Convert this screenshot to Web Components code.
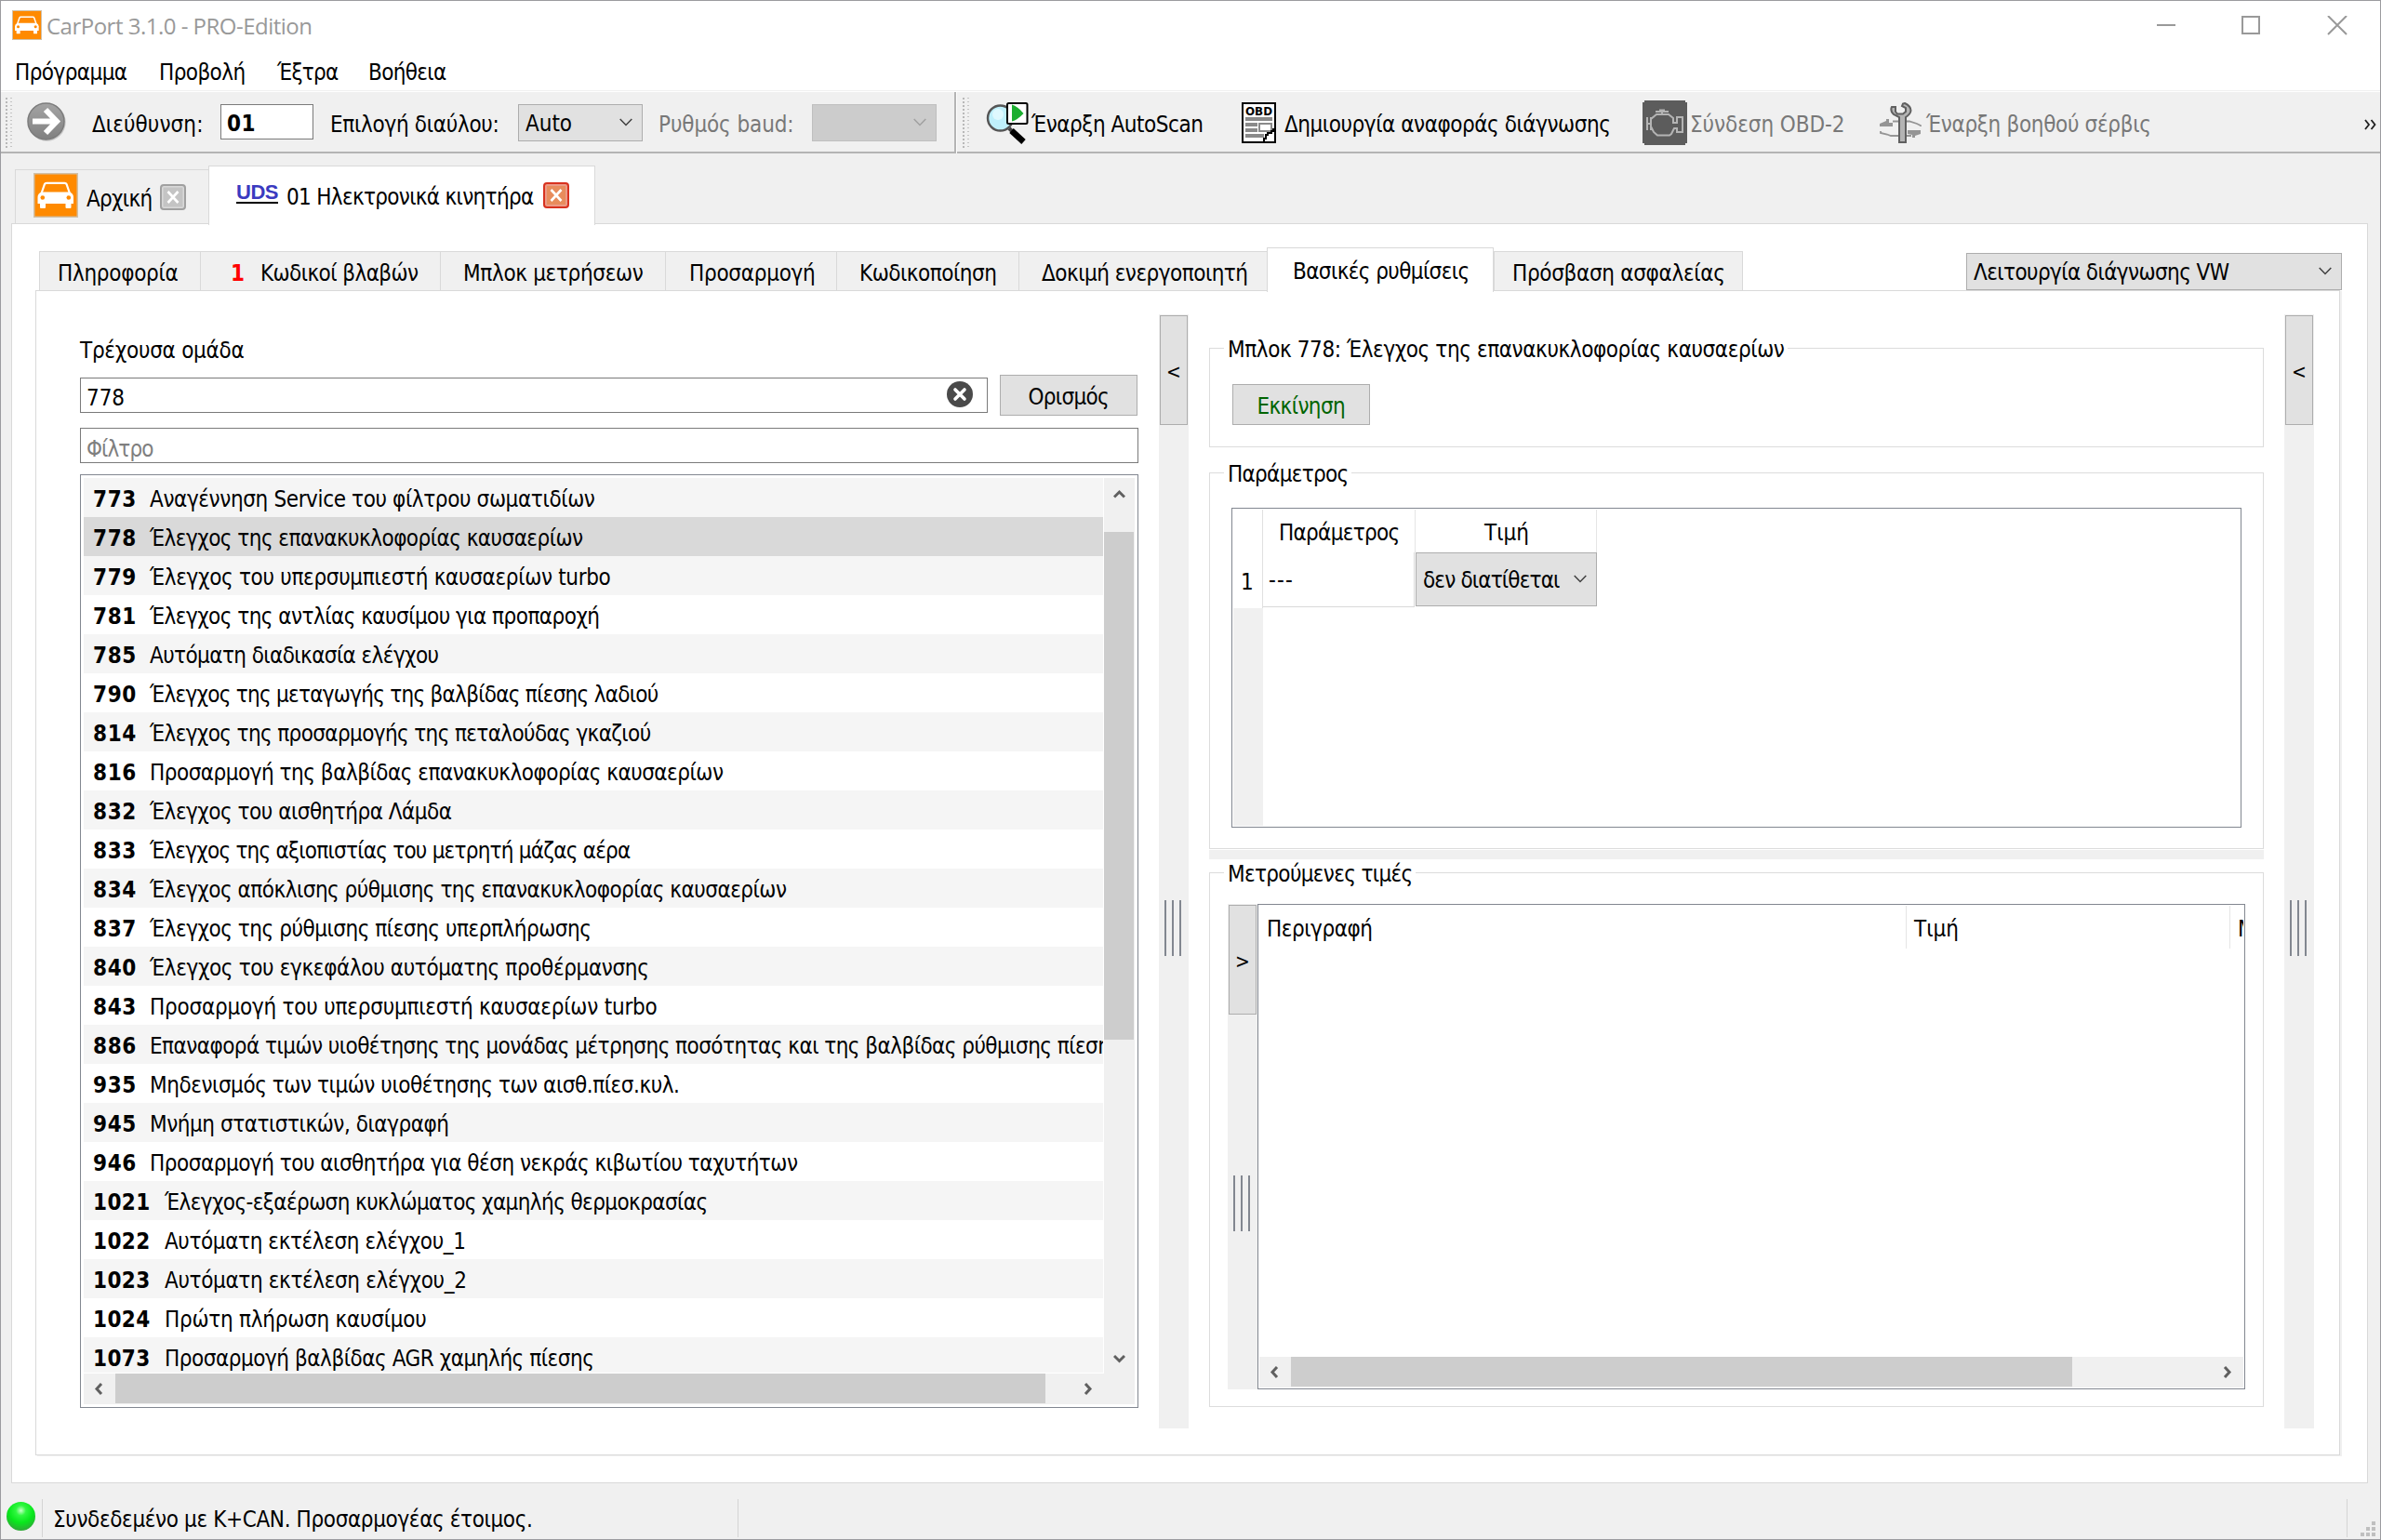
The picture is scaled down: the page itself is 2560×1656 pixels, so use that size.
<!DOCTYPE html>
<html lang="el">
<head>
<meta charset="utf-8">
<title>CarPort 3.1.0 - PRO-Edition</title>
<style>
  html,body{margin:0;padding:0}
  body{width:2560px;height:1656px;overflow:hidden;background:#f0f0f0;color:#000;
    font:24px/28px "DejaVu Sans Condensed","DejaVu Sans",Tahoma,sans-serif}
  .row{display:flex;align-items:flex-start}
  .col{display:flex;flex-direction:column;align-items:flex-start;flex:none}
  .dis{color:#787878}
</style>
</head>
<body>
<app-window>
  <title-bar></title-bar>
  <menu-bar>
    <ui-label w="122" style="margin-left:15px">Πρόγραμμα</ui-label>
    <ui-label w="94" style="margin-left:33px">Προβολή</ui-label>
    <ui-label w="67" style="margin-left:33px">Έξτρα</ui-label>
    <ui-label w="85" style="margin-left:31px">Βοήθεια</ui-label>
  </menu-bar>
  <tool-bar>
    <tool-grip style="margin-left:5px"></tool-grip>
    <ui-icon name="go" style="margin:9px 0 0 15px"></ui-icon>
    <ui-label w="121" style="margin:21px 0 0 28px">Διεύθυνση:</ui-label>
    <ui-field style="margin:13px 0 0 17px;width:100px;--pt:6px"><ui-label w="31" bold>01</ui-label></ui-field>
    <ui-label w="183" style="margin:21px 0 0 18px">Επιλογή διαύλου:</ui-label>
    <ui-combo style="margin:13px 0 0 19px;width:134px;height:40px"><ui-label w="50">Auto</ui-label></ui-combo>
    <ui-label class="dis" w="147" style="margin:21px 0 0 17px">Ρυθμός baud:</ui-label>
    <ui-combo disabled style="margin:13px 0 0 18px;width:134px;height:40px"></ui-combo>
    <tool-divider style="margin-left:19px"></tool-divider>
    <tool-grip style="margin-left:6px"></tool-grip>
    <ui-icon name="scan" style="margin:11px 0 0 17px"></ui-icon>
    <ui-label w="186" style="margin:21px 0 0 3px">Έναρξη AutoScan</ui-label>
    <ui-icon name="report" style="margin:11px 0 0 40px"></ui-icon>
    <ui-label w="352" style="margin:21px 0 0 9px">Δημιουργία αναφοράς διάγνωσης</ui-label>
    <ui-icon name="engine" style="margin:9px 0 0 33px"></ui-icon>
    <ui-label class="dis" w="168" style="margin:21px 0 0 3px">Σύνδεση OBD-2</ui-label>
    <ui-icon name="service" style="margin:11px 0 0 36px"></ui-icon>
    <ui-label class="dis" w="243" style="margin:21px 0 0 4px">Έναρξη βοηθού σέρβις</ui-label>
    <ui-icon name="more" style="margin:29px 0 0 228px"></ui-icon>
  </tool-bar>

  <tab-strip style="height:75px;padding-left:15px">
    <ui-tab style="width:208px;height:58px">
      <ui-icon name="car" style="margin:3px 0 0 19px;width:48px;height:48px"></ui-icon>
      <ui-label w="72" style="margin:17px 0 0 9px">Αρχική</ui-label>
      <close-button style="margin:15px 0 0 7px"></close-button>
    </ui-tab>
    <ui-tab selected style="width:416px;height:64px">
      <uds-mark style="margin:18px 0 0 29px"></uds-mark>
      <ui-label w="267" style="margin:19px 0 0 10px">01 Ηλεκτρονικά κινητήρα</ui-label>
      <close-button hot style="margin:17px 0 0 9px"></close-button>
    </ui-tab>
  </tab-strip>

  <tab-pane style="margin-left:11px;width:2534px;height:1355px">
    <div class="row">
      <tab-strip style="height:71px;padding-left:29px;width:2101px">
        <ui-tab style="width:173px;height:42px"><ui-label w="131" style="margin:9px 0 0 19px">Πληροφορία</ui-label></ui-tab>
        <ui-tab style="width:258px;height:42px"><ui-label w="15" bold style="margin:9px 0 0 32px;color:#f00">1</ui-label><ui-label w="171" style="margin:9px 0 0 17px">Κωδικοί βλαβών</ui-label></ui-tab>
        <ui-tab style="width:242px;height:42px"><ui-label w="195" style="margin:9px 0 0 24px">Μπλοκ μετρήσεων</ui-label></ui-tab>
        <ui-tab style="width:184px;height:42px"><ui-label w="137" style="margin:9px 0 0 25px">Προσαρμογή</ui-label></ui-tab>
        <ui-tab style="width:196px;height:42px"><ui-label w="149" style="margin:9px 0 0 24px">Κωδικοποίηση</ui-label></ui-tab>
        <ui-tab style="width:267px;height:42px"><ui-label w="223" style="margin:9px 0 0 24px">Δοκιμή ενεργοποιητή</ui-label></ui-tab>
        <ui-tab selected style="width:244px;height:48px"><ui-label w="191" style="margin:11px 0 0 27px">Βασικές ρυθμίσεις</ui-label></ui-tab>
        <ui-tab last style="width:268px;height:42px"><ui-label w="230" style="margin:9px 0 0 19px">Πρόσβαση ασφαλείας</ui-label></ui-tab>
      </tab-strip>
      <ui-combo style="margin-top:31px;width:404px;height:40px"><ui-label w="276">Λειτουργία διάγνωσης VW</ui-label></ui-combo>
    </div>
    <tab-pane inset style="margin-left:25px;width:2478px;height:1253px">
      <div class="row">
        <div class="col" style="margin-left:47px;width:1138px">
          <ui-label w="178" style="margin-top:50px">Τρέχουσα ομάδα</ui-label>
          <div class="row" style="margin-top:12px">
            <ui-field style="margin-top:3px;width:976px;--pt:7px"><ui-label w="41">778</ui-label>
              <ui-icon slot="end" name="clear"></ui-icon></ui-field>
            <ui-button style="margin-left:13px;width:148px;height:44px"><ui-label w="88">Ορισμός</ui-label></ui-button>
          </div>
          <ui-field style="margin-top:13px;width:1138px;--pt:8px"><ui-label w="73" style="color:#7f7f7f">Φίλτρο</ui-label></ui-field>
          <block-list style="margin-top:12px"></block-list>
        </div>
        <split-bar style="margin:25px 0 0 22px;height:1198px;--gap:510px">&lt;</split-bar>
        <div class="col" style="margin-left:22px;width:1134px">
          <group-box style="margin-top:61px;height:107px">
            <ui-label slot="title" w="600">Μπλοκ 778: Έλεγχος της επανακυκλοφορίας καυσαερίων</ui-label>
            <ui-button style="margin:23px 0 0 24px;width:148px;height:44px;color:#006400"><ui-label w="96">Εκκίνηση</ui-label></ui-button>
          </group-box>
          <group-box style="margin-top:27px;height:405px">
            <ui-label slot="title" w="131">Παράμετρος</ui-label>
            <param-table style="margin:22px 0 0 23px"></param-table>
          </group-box>
          <div style="margin-top:1px;width:1134px;height:10px;background:#f0f0f0"></div>
          <group-box style="margin-top:14px;height:575px">
            <ui-label slot="title" w="200">Μετρούμενες τιμές</ui-label>
            <div class="row" style="margin:18px 0 0 19px">
              <split-bar style="height:522px;--gap:172px">&gt;</split-bar>
              <value-table></value-table>
            </div>
          </group-box>
        </div>
        <split-bar style="margin:25px 0 0 22px;height:1198px;--gap:510px">&lt;</split-bar>
      </div>
    </tab-pane>
  </tab-pane>
  <status-bar><ui-label w="517">Συνδεδεμένο με K+CAN. Προσαρμογέας έτοιμος.</ui-label></status-bar>
</app-window>

<script>
const define = (name, css, html, init) => {
  const tpl = document.createElement('template');
  tpl.innerHTML = `<style>*{box-sizing:border-box}:host{box-sizing:border-box;flex:none}${css}</style>${html}`;
  customElements.define(name, class extends HTMLElement {
    constructor() {
      super();
      this.attachShadow({mode: 'open'}).append(tpl.content.cloneNode(true));
    }
    connectedCallback() { if (init) init.call(this, this.shadowRoot); }
  });
};

const CAR = `<svg viewBox="0 0 48 48" width="100%" height="100%"><rect width="48" height="48" fill="#d0c0a8"/><rect x="1.5" y="1.5" width="45" height="45" fill="#ff8a00"/>
<path d="M8.500 22 L12 12 Q12.500 10.800 14 10.800 H33.500 Q35 10.800 35.500 12 L39 22" fill="none" stroke="#fff" stroke-width="2.2"/>
<path d="M8.500 20.500 H39 Q43 22 43 26 V33 H4.500 V26 Q4.500 22 8.500 20.500Z" fill="#fff"/>
<circle cx="9.800" cy="26.500" r="2.300" fill="#ff8a00"/><circle cx="37.800" cy="26.500" r="2.300" fill="#ff8a00"/>
<rect x="7" y="32" width="6" height="6" rx="1" fill="#fff"/><rect x="34.500" y="32" width="6" height="6" rx="1" fill="#fff"/></svg>`;

const ICONS = {
  car: [48, 48, CAR],
  go: [42, 46, `<svg width="42" height="46" viewBox="0 0 42 46"><defs><linearGradient id="g" x1="0" y1="0" x2="0" y2="1"><stop offset="0" stop-color="#a4a4a4"/><stop offset="1" stop-color="#808080"/></linearGradient></defs>
    <circle cx="21.500" cy="23.500" r="20.200" fill="#c8c8c8"/><circle cx="20.500" cy="22.500" r="19.500" fill="url(#g)" stroke="#7c7c7c" stroke-width="1.500"/>
    <path d="M6 22.500H31M20 10L32 22.500L20 35" fill="none" stroke="#fff" stroke-width="6"/></svg>`],
  scan: [46, 46, `<svg width="46" height="46" viewBox="0 0 46 46"><path d="M25 28L29 32" stroke="#444" stroke-width="4"/><path d="M27.500 30.500L40.500 42.500" stroke="#000" stroke-width="6.500"/>
    <circle cx="15.500" cy="17" r="13.500" fill="#bff0fb" stroke="#555" stroke-width="2.400"/><circle cx="13" cy="13" r="6" fill="#dff9fe"/>
    <rect x="23" y="1" width="21.500" height="22" rx="1.500" fill="#fff" stroke="#000" stroke-width="2"/><path d="M28 2.500Q34 4 40.500 12Q34 19 28 20.500Z" fill="#1cae30"/></svg>`],
  report: [37, 44, `<svg width="37" height="44" viewBox="0 0 37 44"><rect x="1" y="1" width="35" height="42" fill="#fff" stroke="#000" stroke-width="2"/>
    <text x="4" y="13.500" font-family="DejaVu Sans" font-size="12.500" font-weight="bold" textLength="29" lengthAdjust="spacingAndGlyphs">OBD</text>
    <path d="M4 18H33M4 24H17M4 30H17M4 36H24" stroke="#8a8a8a" stroke-width="4"/><rect x="19" y="23" width="13" height="8" fill="#fff" stroke="#8a8a8a" stroke-width="2"/>
    <path d="M35 29H34V31H32V33H28V35H26V39H24V42" fill="none" stroke="#000" stroke-width="2"/></svg>`],
  engine: [48, 48, `<svg width="48" height="48" viewBox="0 0 48 48"><path d="M2 0H46V2H48V46H46V48H2V46H0V2H2Z" fill="#5c5c5c"/>
    <g fill="none" stroke="#b4b4b4" stroke-width="2"><path d="M14 12H28M18 10.500H24M21 12V15M5 18V32M9 18V32M5 25H9"/>
    <path d="M9 24V20L15 15H28L33 19V24H37V18H43V34H37V30H34L31 36L29 37.500H16L12 34L9 28"/></g></svg>`],
  service: [46, 44, `<svg width="46" height="44" viewBox="0 0 46 44"><path d="M14 20.500H32L40 23L44 25V26M1 31V33L8 34.500L12 36H34" fill="none" stroke="#959595" stroke-width="1.800"/><path d="M0 23L7 20V18H10V22H14V26H0ZM30 30H44V34L38 36V38H35V35L30 34Z" fill="#959595"/>
    <path d="M13 5Q11 9 15 13L21 16V43H28V16Q33 13 33.500 9Q33.500 4 27 1L25 1.500L24 4L28 6V10L25 12.500H19L17 10V5Z" fill="#b4b4b4" stroke="#606060" stroke-width="2"/></svg>`],
  more: [13, 12, `<svg width="13" height="12" viewBox="0 0 13 12"><path d="M1 1L5 6L1 11M7.500 1L11.500 6L7.500 11" fill="none" stroke="#202020" stroke-width="1.800"/></svg>`],
  clear: [28, 28, `<svg width="28" height="28" viewBox="0 0 28 28"><circle cx="14" cy="14" r="14" fill="#4a4a4a"/><path d="M9 9L19 19M19 9L9 19" stroke="#fff" stroke-width="3.600" stroke-linecap="round"/></svg>`],
};
const arrow = (dir) => {
  const p = {left: 'M8 1L3 6.500L8 12', right: 'M3 1L8 6.500L3 12', up: 'M1 8.500L6.500 3L12 8.500', down: 'M1 3L6.500 8.500L12 3'}[dir];
  const [w, h] = dir === 'left' || dir === 'right' ? [11, 13] : [13, 11];
  return `<svg width="${w}" height="${h}" viewBox="0 0 ${w} ${h}"><path d="${p}" fill="none" stroke="#606060" stroke-width="3"/></svg>`;
};

define('ui-icon', ':host{display:block}svg,div{display:block;width:100%;height:100%}', '<div></div>', function (r) {
  const [w, h, svg] = ICONS[this.getAttribute('name')];
  if (!this.style.width) { this.style.width = w + 'px'; this.style.height = h + 'px'; }
  r.querySelector('div').innerHTML = svg;
});

// Single line of text in a box w pixels wide; tracking is adjusted so that the glyphs fill it.
define('ui-label', ':host{display:block;height:28px;line-height:28px;white-space:pre}:host([bold]){font-weight:bold}span{display:inline-block}', '<span><slot></slot></span>', function (r) {
  const w = +this.getAttribute('w');
  if (!w) return;
  const s = r.querySelector('span'), n = this.textContent.length;
  const fill = w > 60 ? w - 1.5 : w;
  this.style.width = w + 'px';
  s.style.letterSpacing = ((fill - s.getBoundingClientRect().width) / n).toFixed(3) + 'px';
});

define('app-window', ':host{display:flex;flex-direction:column;align-items:stretch;width:2560px;height:1656px;border:1px solid #9b9b9f;background:#f0f0f0;overflow:hidden}', '<slot></slot>');

define('title-bar', `:host{display:flex;align-items:flex-start;height:59px;background:#fff;color:#999}
  .t{margin:13px 0 0 5px;font:24px/28px "Open Sans","Noto Sans",sans-serif}svg{display:block}`,
  `<ui-icon name="car" style="margin:10px 0 0 12px;width:32px;height:32px"></ui-icon><ui-label class="t" w="287">CarPort 3.1.0 - PRO-Edition</ui-label>
  <svg style="margin:16px 0 0 1982px" width="206" height="22" viewBox="0 0 206 22"><g fill="none" stroke="#999" stroke-width="2"><path d="M0 10H20"/><rect x="92" y="1" width="18" height="18"/><path d="M184 0L204 20M204 0L184 20"/></g></svg>`);

define('menu-bar', ':host{display:flex;height:39px;padding-top:4px;background:linear-gradient(#f0f0f0,#f0f0f0) 0 37px/100% 1px no-repeat #fff}', '<slot></slot>');
define('tool-bar', ':host{display:flex;align-items:flex-start;height:66px;border-bottom:2px solid #b4b4b4}', '<slot></slot>');
define('tool-grip', ':host{display:block;width:8px;height:54px;margin-top:6px;background:repeating-linear-gradient(#b8b8b8 0 2px,transparent 2px 4px) 0 0/2px 100% no-repeat,repeating-linear-gradient(#c4c4c4 0 1px,transparent 1px 4px) 5px 0/2px 100% no-repeat}', '');
define('tool-divider', ':host{display:block;width:3px;height:66px;background:#b4b4b4;border-right:1px solid #fff}', '');

define('tab-strip', ':host{display:flex;align-items:flex-end}', '<slot></slot>');
define('ui-tab', `:host{display:flex;align-items:flex-start;border:1px solid #d9d9d9;border-width:1px 0 0 1px;background:#f0f0f0}
  :host([last]){border-right-width:1px}
  :host([selected]){background:#fff;margin-bottom:-2px;position:relative;z-index:1;border-right-width:1px}`, '<slot></slot>');
define('tab-pane', ':host{display:block;border:1px solid #d9d9d9;background:#fff}:host([inset]){box-shadow:2px 1px 0 #f0f0f0}', '<slot></slot>');

define('close-button', `:host{display:block;width:28px;height:28px;border:2px solid #a0a0a0;border-radius:4px;background:#c4c4c4;box-shadow:inset 0 0 0 1.5px #d8d8d8}
  :host([hot]){border-color:#d8321f;background:#e88c5c;box-shadow:inset 0 0 0 2px #ec9a86}svg{display:block}`,
  '<svg width="24" height="24" viewBox="0 0 24 24"><path d="M6.500 6L17.500 18M17.500 6L6.500 18" stroke="#fff" stroke-width="2.600"/></svg>');

define('uds-mark', ':host{display:block;width:44px}ui-label{font:bold 22px/22px "Liberation Sans",sans-serif;color:#3a3ac0;border-bottom:2px solid #000;height:22px;line-height:20px}', '<ui-label w="45">UDS</ui-label>');

define('ui-field', ':host{display:flex;justify-content:space-between;height:38px;border:1px solid #7a7a7a;background:#fff;padding:var(--pt,6px) 15px 0 6px}::slotted([slot=end]){margin-top:-4px}', '<slot></slot><slot name="end"></slot>');
define('ui-button', ':host{display:flex;align-items:center;justify-content:center;border:1px solid #adadad;background:#e1e1e1;padding:3px 0 0 1px}', '<slot></slot>');
define('ui-combo', ':host{display:flex;align-items:center;justify-content:space-between;border:1px solid #adadad;background:#e1e1e1;padding:2px 10px 0 7px}:host([disabled]){background:#ccc;border-color:#bfbfbf;--c:#a0a0a0}svg{display:block;margin:0 0 4px auto}',
  '<slot></slot><svg width="14" height="9" viewBox="0 0 14 9"><path d="M.7 1L7 7.500L13.300 1" fill="none" stroke="var(--c,#404040)" stroke-width="1.500"/></svg>');

define('split-bar', `:host{display:flex;flex-direction:column;align-items:center;width:32px;background:#f0f0f0;padding-top:1px}
  b{font-weight:normal;font-size:21px;width:30px;height:118px;line-height:120px;text-align:center;border:1px solid #adadad;background:#e1e1e1}
  i{width:18px;height:60px;margin:calc(var(--gap) + 1px) 2px 0 0;border:solid #828790;border-width:0 2px;background:linear-gradient(#828790,#828790) 6px 0/2px 100% no-repeat}`,
  '<b><slot></slot></b><i></i>');

define('group-box', `:host{display:flex;flex-direction:column;align-items:flex-start;width:1134px;border:1px solid #dcdcdc}
  div{margin:-13px 0 0 15px;padding:0 2px 0 4px;background:#fff}`, '<div><slot name="title"></slot></div><slot></slot>');

define('scroll-bar', `:host{display:flex;align-items:center;background:#f0f0f0}:host([vertical]){flex-direction:column}
  .a,.z{flex:none;display:flex;align-items:center;justify-content:center;width:34px;height:33px;padding-right:2px}
  :host([vertical]) .a,:host([vertical]) .z{width:33px;height:34px;padding:0}
  .t{background:#cdcdcd;width:var(--len);height:32px;align-self:flex-start}
  :host([vertical]) .t{width:32px;height:var(--len);margin-top:var(--off,0)}
  .s{flex:1}`, '<div class="a"></div><div class="t"></div><div class="s"></div><div class="z"></div>', function (r) {
  const v = this.hasAttribute('vertical');
  r.querySelector('.a').innerHTML = arrow(v ? 'up' : 'left');
  r.querySelector('.z').innerHTML = arrow(v ? 'down' : 'right');
});

const BLOCKS = [
  [773, 'Αναγέννηση Service του φίλτρου σωματιδίων', 480], [778, 'Έλεγχος της επανακυκλοφορίας καυσαερίων', 467],
  [779, 'Έλεγχος του υπερσυμπιεστή καυσαερίων turbo', 497], [781, 'Έλεγχος της αντλίας καυσίμου για προπαροχή', 485],
  [785, 'Αυτόματη διαδικασία ελέγχου', 312], [790, 'Έλεγχος της μεταγωγής της βαλβίδας πίεσης λαδιού', 548],
  [814, 'Έλεγχος της προσαρμογής της πεταλούδας γκαζιού', 540], [816, 'Προσαρμογή της βαλβίδας επανακυκλοφορίας καυσαερίων', 618],
  [832, 'Έλεγχος του αισθητήρα Λάμδα', 326], [833, 'Έλεγχος της αξιοπιστίας του μετρητή μάζας αέρα', 518],
  [834, 'Έλεγχος απόκλισης ρύθμισης της επανακυκλοφορίας καυσαερίων', 686], [837, 'Έλεγχος της ρύθμισης πίεσης υπερπλήρωσης', 476],
  [840, 'Έλεγχος του εγκεφάλου αυτόματης προθέρμανσης', 538], [843, 'Προσαρμογή του υπερσυμπιεστή καυσαερίων turbo', 547],
  [886, 'Επαναφορά τιμών υιοθέτησης της μονάδας μέτρησης ποσότητας και της βαλβίδας ρύθμισης πίεσης', 1046],
  [935, 'Μηδενισμός των τιμών υιοθέτησης των αισθ.πίεσ.κυλ.', 571], [945, 'Μνήμη στατιστικών, διαγραφή', 323],
  [946, 'Προσαρμογή του αισθητήρα για θέση νεκράς κιβωτίου ταχυτήτων', 698], [1021, 'Έλεγχος-εξαέρωση κυκλώματος χαμηλής θερμοκρασίας', 585],
  [1022, 'Αυτόματη εκτέλεση ελέγχου_1', 325], [1023, 'Αυτόματη εκτέλεση ελέγχου_2', 326], [1024, 'Πρώτη πλήρωση καυσίμου', 283], [1073, 'Προσαρμογή βαλβίδας AGR χαμηλής πίεσης', 463],
];
define('block-list', `:host{display:grid;grid-template-columns:1097px 33px;grid-template-rows:963px 33px;width:1138px;height:1004px;border:1px solid #828790;padding:3px}
  .rows{width:1096px;height:962px;overflow:hidden}
  .r{display:flex;height:42px;padding:9px 0 0 10px}.r:nth-child(odd){background:#f5f5f5}.r.sel{background:#d9d9d9}
  .h{grid-column:1/3;display:flex;background:#f0f0f0}`,
  `<div class="rows"></div><scroll-bar vertical style="--len:546px;--off:24px;height:963px"></scroll-bar>
  <div class="h"><scroll-bar style="--len:1000px;width:1097px"></scroll-bar></div>`, function (r) {
  r.querySelector('.rows').innerHTML = BLOCKS.map(([n, t, w]) =>
    `<div class="r${n === 778 ? ' sel' : ''}"><ui-label bold w="${n > 999 ? 63 : 47}">${n}</ui-label><ui-label w="${w}" style="margin-left:14px">${t}</ui-label></div>`).join('');
});

define('param-table', `:host{display:block;width:1086px;height:344px;border:1px solid #828790;padding:1px}
  .hd,.rw,.ft{display:flex}.hd{height:46px}.rw{height:60px}.ft{height:234px}
  .n{width:32px;border-right:1px solid #e0e0e0}.p{width:164px;border-right:1px solid #e5e5e5;display:flex;justify-content:center}.v{width:195px;border-right:1px solid #e5e5e5;display:flex;justify-content:center}
  .hd ui-label{margin:11px 0 0 2px}.rw .n{display:flex;padding:18px 0 0 8px}
  .c{width:163px;height:59px;border:solid #d9d9d9;border-width:0 1px 1px 0;padding:16px 0 0 6px}
  .ft div{width:32px;background:#f0f0f0}`,
  `<div class="hd"><div class="n"></div><div class="p"><ui-label w="131">Παράμετρος</ui-label></div><div class="v"><ui-label w="48">Τιμή</ui-label></div></div>
  <div class="rw"><div class="n"><ui-label w="14">1</ui-label></div><div class="c"><ui-label w="27">---</ui-label></div><ui-combo style="margin-left:1px;width:195px;height:58px"><ui-label w="148">δεν διατίθεται</ui-label></ui-combo></div>
  <div class="ft"><div></div></div>`);

define('value-table', `:host{display:flex;flex-direction:column;width:1062px;height:522px;border:1px solid #828790;padding:1px}
  .hd{display:flex;height:46px;flex:none;overflow:hidden}.hd div{flex:none;border-right:1px solid #e5e5e5;padding:11px 0 0 8px}
  .b{flex:1}`,
  `<div class="hd"><div style="width:696px"><ui-label w="115">Περιγραφή</ui-label></div><div style="width:348px"><ui-label w="48">Τιμή</ui-label></div><div style="width:14px;border:0;overflow:hidden;padding-right:0"><ui-label>Μ</ui-label></div></div>
  <div class="b"></div><scroll-bar style="--len:840px;height:33px"></scroll-bar>`);

define('status-bar', `:host{display:flex;align-items:flex-start;height:60px}
  .led{margin:20px 0 0 6px;display:block}.s{width:1px;height:41px;margin-top:17px;background:#d4d4d4}
  .x{margin:25px 0 0 11px;width:737px;display:flex}`,
  `<svg class="led" width="32" height="32" viewBox="0 0 32 32"><defs><radialGradient id="l" cx=".5" cy=".3" r=".7"><stop offset="0" stop-color="#c8ffc8"/><stop offset=".25" stop-color="#30f840"/><stop offset=".6" stop-color="#08e81c"/><stop offset="1" stop-color="#30a838"/></radialGradient></defs><circle cx="15.500" cy="15.500" r="15.500" fill="url(#l)"/></svg>
  <div class="s" style="margin-left:6px"></div><div class="x"><slot></slot></div><div class="s" style="margin-left:-1px"></div><div class="s" style="margin-left:1729px"></div>
  <svg style="margin:41px 0 0 14px;display:block" width="16" height="16" viewBox="0 0 16 16" fill="#bfbfbf"><path d="M12 0h4v4h-4zM6 6h4v4H6zM12 6h4v4h-4zM0 12h4v4H0zM6 12h4v4H6zM12 12h4v4h-4z"/></svg>`);
</script>
</body>
</html>
